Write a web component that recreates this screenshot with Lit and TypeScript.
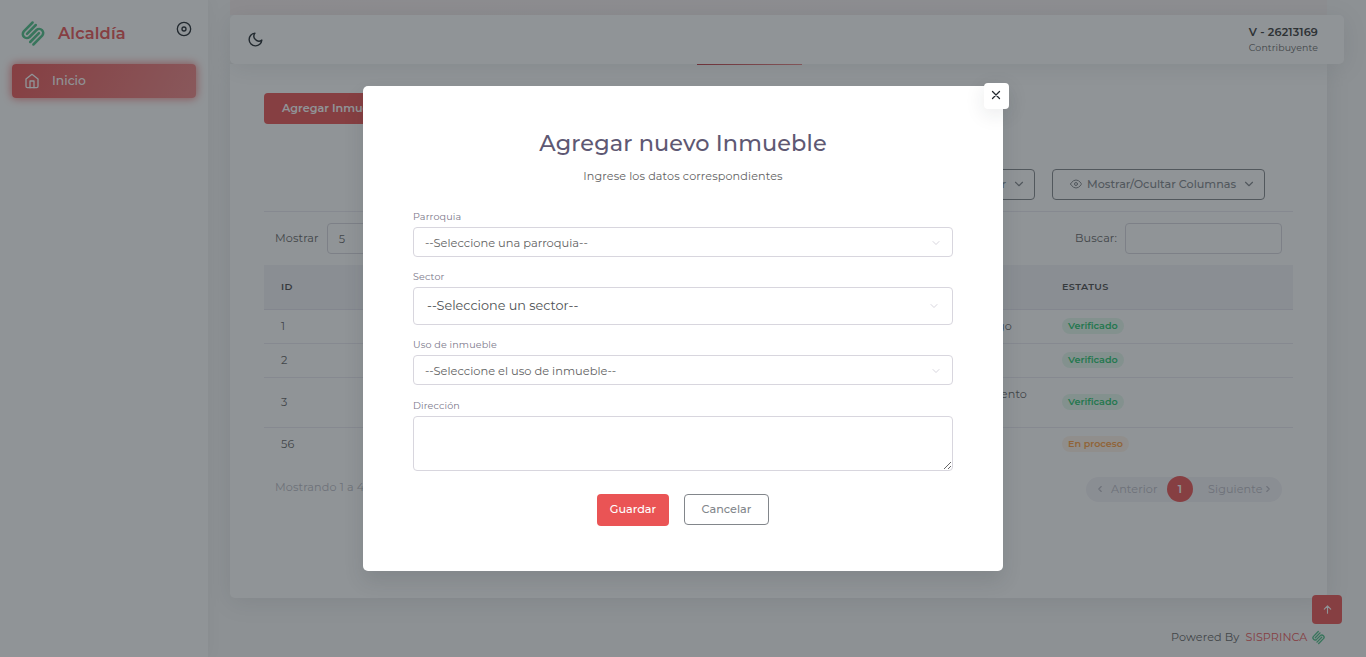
import { LitElement, html, css } from "lit";
import { customElement } from "lit/decorators.js";

const chevron = (cls: string) => html`<svg class=${cls} viewBox="0 0 24 24"><path d="M6 9l6 6 6-6" /></svg>`;

const logo = (cls: string) => html`<svg class="logo ${cls}" viewBox="0 0 24 27">
  <path d="M11.6 2.5L2.8 11.4a4 4 0 0 0 5.7 5.6L15.5 10a4 4 0 0 1 5.7 5.6L12.4 24.5" />
  <path d="M14.8 5L6 13.9M18 13.1L9.2 22" />
</svg>`;

interface Row {
  id: string;
  address: string;
  status: string;
  kind: string;
  tall?: boolean;
}

const rows: Row[] = [
  { id: "1", address: "go", status: "Verificado", kind: "ok" },
  { id: "2", address: "", status: "Verificado", kind: "ok" },
  { id: "3", address: "ento", status: "Verificado", kind: "ok", tall: true },
  { id: "56", address: "", status: "En proceso", kind: "wait" },
];

@customElement("app-root")
export class AppRoot extends LitElement {
  static styles = css`
    :host {
      display: block;
      position: relative;
      width: 1366px;
      height: 657px;
      overflow: hidden;
      background: #f8f8f8;
      color: #626262;
      font: 400 11.2px/18px Montserrat, Inter, sans-serif;
      letter-spacing: 0.128px;
    }
    * { box-sizing: border-box; }
    svg { fill: none; stroke: currentColor; stroke-width: 2; stroke-linecap: round; stroke-linejoin: round; flex: none; }
    .page { display: flex; height: 657px; }

    .side { width: 208px; padding: 19px 12px; background: #fff; box-shadow: 0 0 15px rgba(34, 41, 47, 0.05); }
    .brand { display: flex; height: 45px; padding-left: 9px; color: #ea5455; }
    .logo { stroke: #4fc088; stroke-width: 2.5; }
    .logo.big { width: 24px; height: 27px; margin-top: 1px; }
    .brand-name { margin: 2px 0 0 13px; width: 118px; font-size: 16.3px; line-height: 25px; font-weight: 600; }
    .disc { width: 16px; height: 16px; margin-top: 2px; color: #22292f; }
    .nav { display: flex; align-items: center; width: 184px; height: 34px; padding-left: 12px; border-radius: 4px; color: #fff; font-size: 12.32px; font-weight: 500; letter-spacing: 0; background: linear-gradient(118deg, #ea5455, rgba(234, 84, 85, 0.7)); box-shadow: 0 0 8px 1px rgba(234, 84, 85, 0.7); }
    .nav svg { width: 16px; height: 16px; margin-right: 12px; }

    .main { flex: 1; padding-left: 22px; display: flex; flex-direction: column; }
    .strip { height: 15px; width: 1097px; background: linear-gradient(90deg, #f8eeee, #f8f1f2 60%, #f8f2f2); }
    .bar { position: relative; display: flex; align-items: center; justify-content: space-between; width: 1114px; height: 49px; padding: 0 26px 0 17px; border-radius: 5px; background: #fff; box-shadow: 0 4px 24px rgba(34, 41, 47, 0.1); }
    .moon { width: 17px; height: 17px; color: #22292f; }
    .user { text-align: right; padding-bottom: 1px; }
    .user-name { line-height: 17px; font-weight: 600; color: #3b3b3b; }
    .user-role { font-size: 9.4px; line-height: 14px; }
    .card { width: 1097px; height: 534px; padding: 0 34px; border-radius: 0 0 5px 5px; background: #fff; box-shadow: 0 4px 24px rgba(34, 41, 47, 0.1); }
    .tab-line { width: 105px; height: 1px; margin-left: 433px; background: linear-gradient(90deg, #c33c45, #f08788); }
    .add { width: 150px; height: 31px; margin-top: 28px; padding-left: 18px; border-radius: 4px; background: #ea5455; color: #fff; font-weight: 600; line-height: 30px; white-space: nowrap; letter-spacing: 0; }
    .tools { display: flex; justify-content: flex-end; gap: 17px; margin-top: 45px; padding-right: 28px; }
    .tool { display: flex; align-items: center; height: 31px; padding-bottom: 1px; border: 1px solid #82868b; border-radius: 4px; color: #82868b; font-weight: 500; letter-spacing: 0; white-space: nowrap; }
    .tool.export { width: 100px; padding-right: 8px; justify-content: flex-end; }
    .tool.columns { width: 213px; padding-left: 17px; }
    .tool .eye { width: 12px; height: 12px; margin-right: 5px; }
    .down { width: 14px; height: 14px; margin-left: 6px; }
    .filters { display: flex; justify-content: space-between; align-items: center; width: 1029px; height: 54px; margin-top: 11px; border-top: 1px solid #ebe9f1; padding: 0 11px; }
    .filters label { display: flex; align-items: center; gap: 8px; line-height: 16px; }
    .filters .caption { padding-bottom: 2px; }
    .box { height: 31px; border: 1px solid #d8d6de; border-radius: 4px; line-height: 30px; padding-left: 11px; }
    .box.length { width: 60px; }
    .box.search { width: 157px; }

    .row { display: grid; grid-template-columns: 690px 91px 1fr; align-items: center; width: 1029px; height: 34px; padding: 0 0 1px 17px; border-top: 1px solid #ebe9f1; }
    .row.head { height: 44px; padding-bottom: 0; background: #f3f2f7; border: 0; font-size: 9.6px; font-weight: 600; color: #4b4b4b; letter-spacing: 0.4px; }
    .row.first { border-top-color: #e4e2ec; }
    .row.tall { height: 50px; }
    .address { text-align: right; padding-right: 50px; }
    .tall .address { padding: 0 35px 16px 0; }
    .pill { justify-self: start; height: 16px; padding: 0 6px; border-radius: 8px; font-size: 9.6px; line-height: 16px; font-weight: 600; letter-spacing: 0; }
    .ok { color: #28c76f; background: rgba(40, 199, 111, 0.12); }
    .wait { color: #ff9f43; background: rgba(255, 159, 67, 0.12); }
    .bottom { display: flex; justify-content: space-between; width: 1029px; padding: 16px 11px 0; color: #b9b9c3; }
    .info { padding-top: 1px; }
    .pages { display: flex; align-items: center; width: 196px; height: 25px; border-radius: 13px; background: #f3f2f7; padding: 0 9px 1px; }
    .pages svg { width: 10px; height: 10px; stroke-width: 2.6; }
    .prev { width: 72px; flex: none; display: flex; align-items: center; gap: 6px; }
    .current { flex: none; width: 26px; height: 26px; border-radius: 50%; background: #ea5455; color: #fff; text-align: center; line-height: 26px; font-weight: 600; letter-spacing: 0; }
    .next { margin-left: 15px; display: flex; align-items: center; }
    .foot { display: flex; align-items: center; height: 20px; margin: 29px 0 0 941px; white-space: nowrap; }
    .foot-brand { color: #ea5455; margin: 0 5px 0 6px; letter-spacing: 0.05px; }
    .logo.small { width: 13px; height: 15px; }
    .top { position: absolute; left: 1312px; top: 595px; display: grid; place-items: center; width: 30px; height: 29px; border-radius: 4px; background: #ea5455; color: #fff; }
    .top svg { width: 11px; height: 11px; stroke-width: 2.4; }

    .overlay { position: absolute; inset: 0; padding: 86px 0 0 363px; background: rgba(34, 41, 47, 0.5); }
    .modal { position: relative; width: 640px; height: 485px; padding: 40px 50px; border-radius: 5px; background: #fff; box-shadow: 0 10px 20px rgba(34, 41, 47, 0.12); }
    .close { position: absolute; right: -6px; top: -3px; display: grid; place-items: center; width: 25px; height: 26px; padding: 0 1px 2px 0; border-radius: 4px; background: #fff; color: #22292f; box-shadow: 0 5px 20px rgba(34, 41, 47, 0.1); }
    .close svg { width: 14px; height: 14px; stroke-width: 2.2; }
    h1 { margin: 0; height: 33px; text-align: center; color: #5e5873; font-size: 22.4px; line-height: 35px; font-weight: 500; }
    .sub { height: 18px; margin: 8px 0 24px; text-align: center; }
    .label { height: 18px; font-size: 9.6px; line-height: 16px; color: #7b788a; }
    .pick { display: flex; align-items: center; justify-content: space-between; height: 30px; margin-bottom: 12px; padding: 2px 10px 0 11px; border: 1px solid #d8d6de; border-radius: 4px; font-size: 11.45px; letter-spacing: 0; }
    .pick.large { height: 38px; padding: 0 12px 0 13px; font-size: 12.8px; color: #4e5154; }
    .pick svg { width: 12px; height: 12px; color: #d8d6de; }
    .label.last { margin-top: 13px; }
    textarea { display: block; width: 540px; height: 55px; border: 1px solid #d8d6de; border-radius: 4px; background: #fff; resize: vertical; }
    .actions { display: flex; justify-content: center; gap: 15px; margin-top: 23px; font-weight: 500; letter-spacing: 0; }
    .save { width: 72px; height: 32px; border-radius: 4px; background: #ea5455; color: #fff; text-align: center; line-height: 31px; }
    .cancel { width: 85px; height: 31px; border: 1px solid #82868b; border-radius: 4px; color: #82868b; text-align: center; line-height: 29px; }
  `;

  render() {
    return html`
      <div class="page">
        <aside class="side">
          <div class="brand">
            ${logo("big")}
            <span class="brand-name">Alcaldía</span>
            <svg class="disc" viewBox="0 0 24 24"><circle cx="12" cy="12" r="10" /><circle cx="12" cy="12" r="3" /></svg>
          </div>
          <div class="nav">
            <svg viewBox="0 0 24 24"><path d="M3 9l9-7 9 7v11a2 2 0 0 1-2 2H5a2 2 0 0 1-2-2z" /><path d="M9 22V12h6v10" /></svg>
            <span>Inicio</span>
          </div>
        </aside>
        <div class="main">
          <div class="strip"></div>
          <header class="bar">
            <svg class="moon" viewBox="0 0 24 24"><path d="M21 12.79A9 9 0 1 1 11.21 3 7 7 0 0 0 21 12.79z" /></svg>
            <div class="user">
              <div class="user-name">V - 26213169</div>
              <div class="user-role">Contribuyente</div>
            </div>
          </header>
          <section class="card">
            <div class="tab-line"></div>
            <div class="add">Agregar Inmueble</div>
            <div class="tools">
              <div class="tool export">Exportar ${chevron("down")}</div>
              <div class="tool columns">
                <svg class="eye" viewBox="0 0 24 24"><path d="M1 12s4-8 11-8 11 8 11 8-4 8-11 8-11-8-11-8z" /><circle cx="12" cy="12" r="3" /></svg>
                <span>Mostrar/Ocultar Columnas</span>${chevron("down")}
              </div>
            </div>
            <div class="filters">
              <label><span class="caption">Mostrar</span><span class="box length">5</span></label>
              <label><span class="caption">Buscar:</span><span class="box search"></span></label>
            </div>
            <div class="row head"><span>ID</span><span></span><span>ESTATUS</span></div>
            ${rows.map(
              (r, i) => html`<div class="row ${i === 0 ? "first" : ""} ${r.tall ? "tall" : ""}">
                <span>${r.id}</span><span class="address">${r.address}</span><span class="pill ${r.kind}">${r.status}</span>
              </div>`
            )}
            <div class="bottom">
              <span class="info">Mostrando 1 a 4 de 4</span>
              <div class="pages">
                <span class="prev"><svg viewBox="0 0 24 24"><path d="M15 18l-6-6 6-6" /></svg>Anterior</span>
                <span class="current">1</span>
                <span class="next">Siguiente<svg viewBox="0 0 24 24"><path d="M9 18l6-6-6-6" /></svg></span>
              </div>
            </div>
          </section>
          <footer class="foot"><span>Powered By</span><span class="foot-brand">SISPRINCA</span>${logo("small")}</footer>
        </div>
      </div>
      <div class="top"><svg viewBox="0 0 24 24"><path d="M12 20V4M5 11l7-7 7 7" /></svg></div>
      <div class="overlay">
        <div class="modal">
          <div class="close"><svg viewBox="0 0 24 24"><path d="M18 6L6 18M6 6l12 12" /></svg></div>
          <h1>Agregar nuevo Inmueble</h1>
          <div class="sub">Ingrese los datos correspondientes</div>
          <div class="label">Parroquia</div>
          <div class="pick"><span>--Seleccione una parroquia--</span>${chevron("")}</div>
          <div class="label">Sector</div>
          <div class="pick large"><span>--Seleccione un sector--</span>${chevron("")}</div>
          <div class="label">Uso de inmueble</div>
          <div class="pick"><span>--Seleccione el uso de inmueble--</span>${chevron("")}</div>
          <div class="label last">Dirección</div>
          <textarea></textarea>
          <div class="actions"><div class="save">Guardar</div><div class="cancel">Cancelar</div></div>
        </div>
      </div>
    `;
  }
}
